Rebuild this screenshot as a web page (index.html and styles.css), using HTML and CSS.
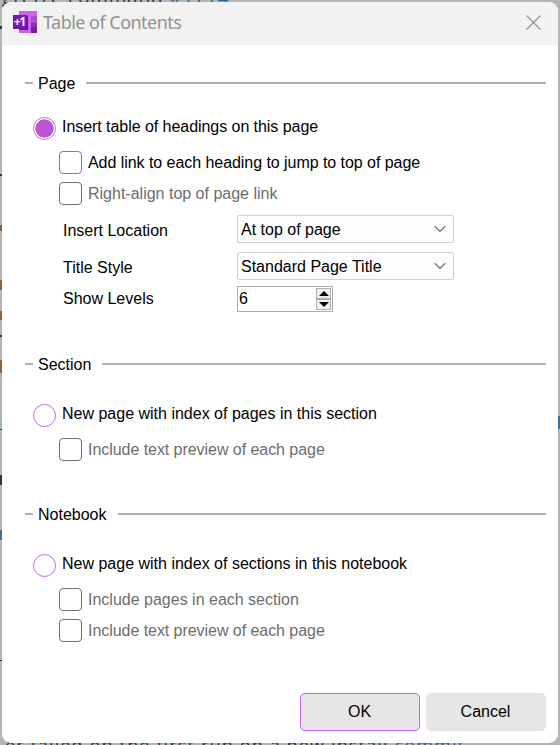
FILE: index.html
```html
<!DOCTYPE html>
<html lang="en">
<head>
<meta charset="utf-8">
<title>Table of Contents</title>
<link rel="stylesheet" href="styles.css">
</head>
<body>
<div class="backdrop" aria-hidden="true">
  <span class="behind behind-top">gretze command <span class="link">#1714</span></span>
  <span class="behind behind-bottom">er failed on the first run on a new install <span class="link">commit</span></span>
  <i class="mark m1"></i><i class="mark m2"></i><i class="mark m3 warm"></i><i class="mark m4 warm"></i><i class="mark m5 warm"></i><i class="mark m6"></i><i class="mark m7 warm"></i><i class="mark m8"></i><i class="mark m9 blue"></i><i class="mark m10"></i><i class="mark m11 blue"></i><i class="mark m12"></i><i class="mark m13 blue"></i>
</div>
<main class="dialog">
  <header class="titlebar">
    <svg class="app-icon" width="24" height="22" viewBox="0 0 24 22">
      <path fill="#ca64ea" d="M6 0h12v22H6z"/>
      <path fill="#ca64ea" d="M18 0h6v5h-6z"/>
      <path fill="#ae4bd5" d="M18 5h6v5.500h-6z"/>
      <path fill="#9332bf" d="M18 10.500h6V16h-6z"/>
      <path fill="#7719aa" d="M18 16h6v6h-6z"/>
      <path fill="#5b177c" d="M6 5h9v14H6z"/>
      <rect y="4" width="14" height="14" fill="#7719aa"/>
      <text x="1" y="15" class="icon-text">+1</text>
    </svg>
    <h1 class="title">Table of Contents</h1>
    <svg class="close" width="15" height="15" viewBox="0 0 15 15"><path d="M.5.500l14 14M14.500.500l-14 14" fill="none" stroke="#929292" stroke-width="1.200"/></svg>
  </header>
  <section class="group">
    <h2 class="heading"><span>Page</span></h2>
    <label class="option"><i class="radio checked"></i><span class="tight">Insert table of headings on this page</span></label>
    <label class="option sub"><i class="check active"></i><span class="tight">Add link to each heading to jump to top of page</span></label>
    <label class="option sub disabled"><i class="check"></i><span>Right-align top of page link</span></label>
    <div class="field location"><span class="name">Insert Location</span>
      <div class="select"><span>At top of page</span><svg width="12" height="8" viewBox="0 0 12 8"><path d="M.7 1.200L6 6.500l5.300-5.300"/></svg></div></div>
    <div class="field style"><span class="name">Title Style</span>
      <div class="select"><span>Standard Page Title</span><svg width="12" height="8" viewBox="0 0 12 8"><path d="M.7 1.200L6 6.500l5.300-5.300"/></svg></div></div>
    <div class="field levels"><span class="name">Show Levels</span>
      <div class="spinner"><span>6</span><div class="steps">
        <b><svg width="10" height="5" viewBox="0 0 10 5"><path d="M5 0l5 5H0z"/></svg></b>
        <b><svg width="10" height="5" viewBox="0 0 10 5"><path d="M0 0h10L5 5z"/></svg></b>
      </div></div></div>
  </section>
  <section class="group second">
    <h2 class="heading"><span>Section</span></h2>
    <label class="option"><i class="radio"></i><span>New page with index of pages in this section</span></label>
    <label class="option sub disabled"><i class="check"></i><span class="tight">Include text preview of each page</span></label>
  </section>
  <section class="group third">
    <h2 class="heading"><span>Notebook</span></h2>
    <label class="option"><i class="radio"></i><span>New page with index of sections in this notebook</span></label>
    <label class="option sub disabled"><i class="check"></i><span>Include pages in each section</span></label>
    <label class="option sub disabled"><i class="check"></i><span class="tight">Include text preview of each page</span></label>
  </section>
  <footer class="actions"><button class="button primary">OK</button><button class="button">Cancel</button></footer>
</main>
</body>
</html>
```
FILE: styles.css
```css
* { box-sizing: border-box; }
body {
  margin: 0; width: 560px; height: 745px; overflow: hidden;
  position: relative; padding: 2px; background: #b5b5b5;
  font: 16px/20px "Liberation Sans", sans-serif; color: #000;
}
.backdrop { position: absolute; inset: 0; overflow: hidden; }
.behind { position: absolute; white-space: nowrap; font: 19px/24px "Open Sans", sans-serif; color: #333; }
.behind-top { left: 2px; top: -15px; letter-spacing: .85px; }
.behind-bottom { left: 5px; top: 733px; font-size: 18px; letter-spacing: 1.15px; }
.link { color: #28639c; }
.mark { position: absolute; left: 0; width: 2px; height: 3px; background: #35373d; }
.warm { background: #8e613d; }
.blue { background: #39719b; }
.m1 { top: 26px; } .m2 { top: 174px; height: 2px; } .m3 { top: 225px; height: 6px; }
.m4 { top: 280px; height: 10px; } .m5 { top: 311px; height: 9px; } .m6 { top: 335px; height: 2px; }
.m7 { top: 360px; height: 13px; } .m8 { top: 429px; height: 1px; } .m9 { top: 419px; height: 10px; background: #9db7ba; }
.m10 { top: 475px; height: 10px; } .m11 { top: 530px; height: 10px; } .m12 { top: 660px; height: 1px; }
.m13 { left: 558px; top: 416px; height: 13px; }
.dialog {
  position: relative; width: 556px; height: 741px; background: #fff;
  border-radius: 9px; overflow: hidden;
}
.titlebar { height: 43px; padding: 0 15px 0 11px; display: flex; align-items: center; background: #f2f2f2; }
.app-icon { margin-top: -3px; }
.icon-text { font: bold 11.500px "Open Sans", sans-serif; fill: #fff; letter-spacing: -1px; }
.title { margin: -3px 0 0 6px; font: 18px/24px "Noto Sans", sans-serif; letter-spacing: -.52px; color: #929292; }
.close { margin: -2px 2px 0 auto; }
.group { height: 281px; padding: 28px 12px 0 23px; }
.second { height: 150px; }
.third { height: 171px; }
.heading { display: flex; align-items: center; height: 20px; margin: 0; font: inherit; gap: 11px; }
.heading::before, .heading::after { content: ""; height: 2px; background: #b2b2b2; }
.heading::before { width: 8px; margin-right: -6px; }
.heading::after { flex: 1; }
.heading span { padding-top: 2px; }
.option { display: flex; height: 23px; margin: 24px 0 0 8px; gap: 6px; white-space: nowrap; }
.second .option, .third .option { margin-top: 30px; }
.sub > span { margin-top: 2px; }
.tight { letter-spacing: -.05px; }
.group .option.sub { margin: 11px 0 0 34px; }
.group .option.sub + .option.sub { margin-top: 8px; }
.disabled { color: #6d6d6d; }
.radio, .check { width: 23px; height: 23px; border: 1px solid #c16bd9; flex: none; }
.radio { border-radius: 50%; }
.checked { background: radial-gradient(circle, #ba55d3 0 8.800px, #fff 9.400px); }
.check { border-color: #707070; border-radius: 4px; }
.active { border-color: #ba55d3; }
.field { display: flex; align-items: center; height: 28px; margin-left: 38px; }
.name { width: 174px; padding-top: 3px; }
.location { margin-top: 10px; }
.style { margin-top: 9px; }
.levels { height: 26px; margin-top: 6px; }
.levels .name { padding-top: 0; }
.select {
  width: 217px; height: 28px; display: flex; align-items: center; justify-content: space-between;
  border: 1px solid #d0d0d0; border-radius: 2px; background: #fdfdfd; padding: 0 7px 0 3px;
}
.select span { padding-top: 2px; }
.select path { fill: none; stroke: #666; stroke-width: 1.200; }
.spinner { display: flex; justify-content: space-between; width: 96px; height: 26px; border: 1px solid #abadb3; padding: 1px; }
.spinner span { padding-top: 1px; }
.steps { width: 15px; display: flex; flex-direction: column; }
.steps b { display: flex; flex: 1; align-items: center; justify-content: center; background: #f0f0f0; border: 1px solid #adadad; }
.actions { display: flex; gap: 6px; padding: 3px 12px 0; margin-top: 43px; justify-content: flex-end; }
.button { width: 120px; height: 38px; border: 1px solid #ebdcee; border-radius: 5px; background: #e6e6e6; color: #000; font: inherit; padding: 0 1px 1px 0; }
.primary { border-color: #c65cf5; }
```
